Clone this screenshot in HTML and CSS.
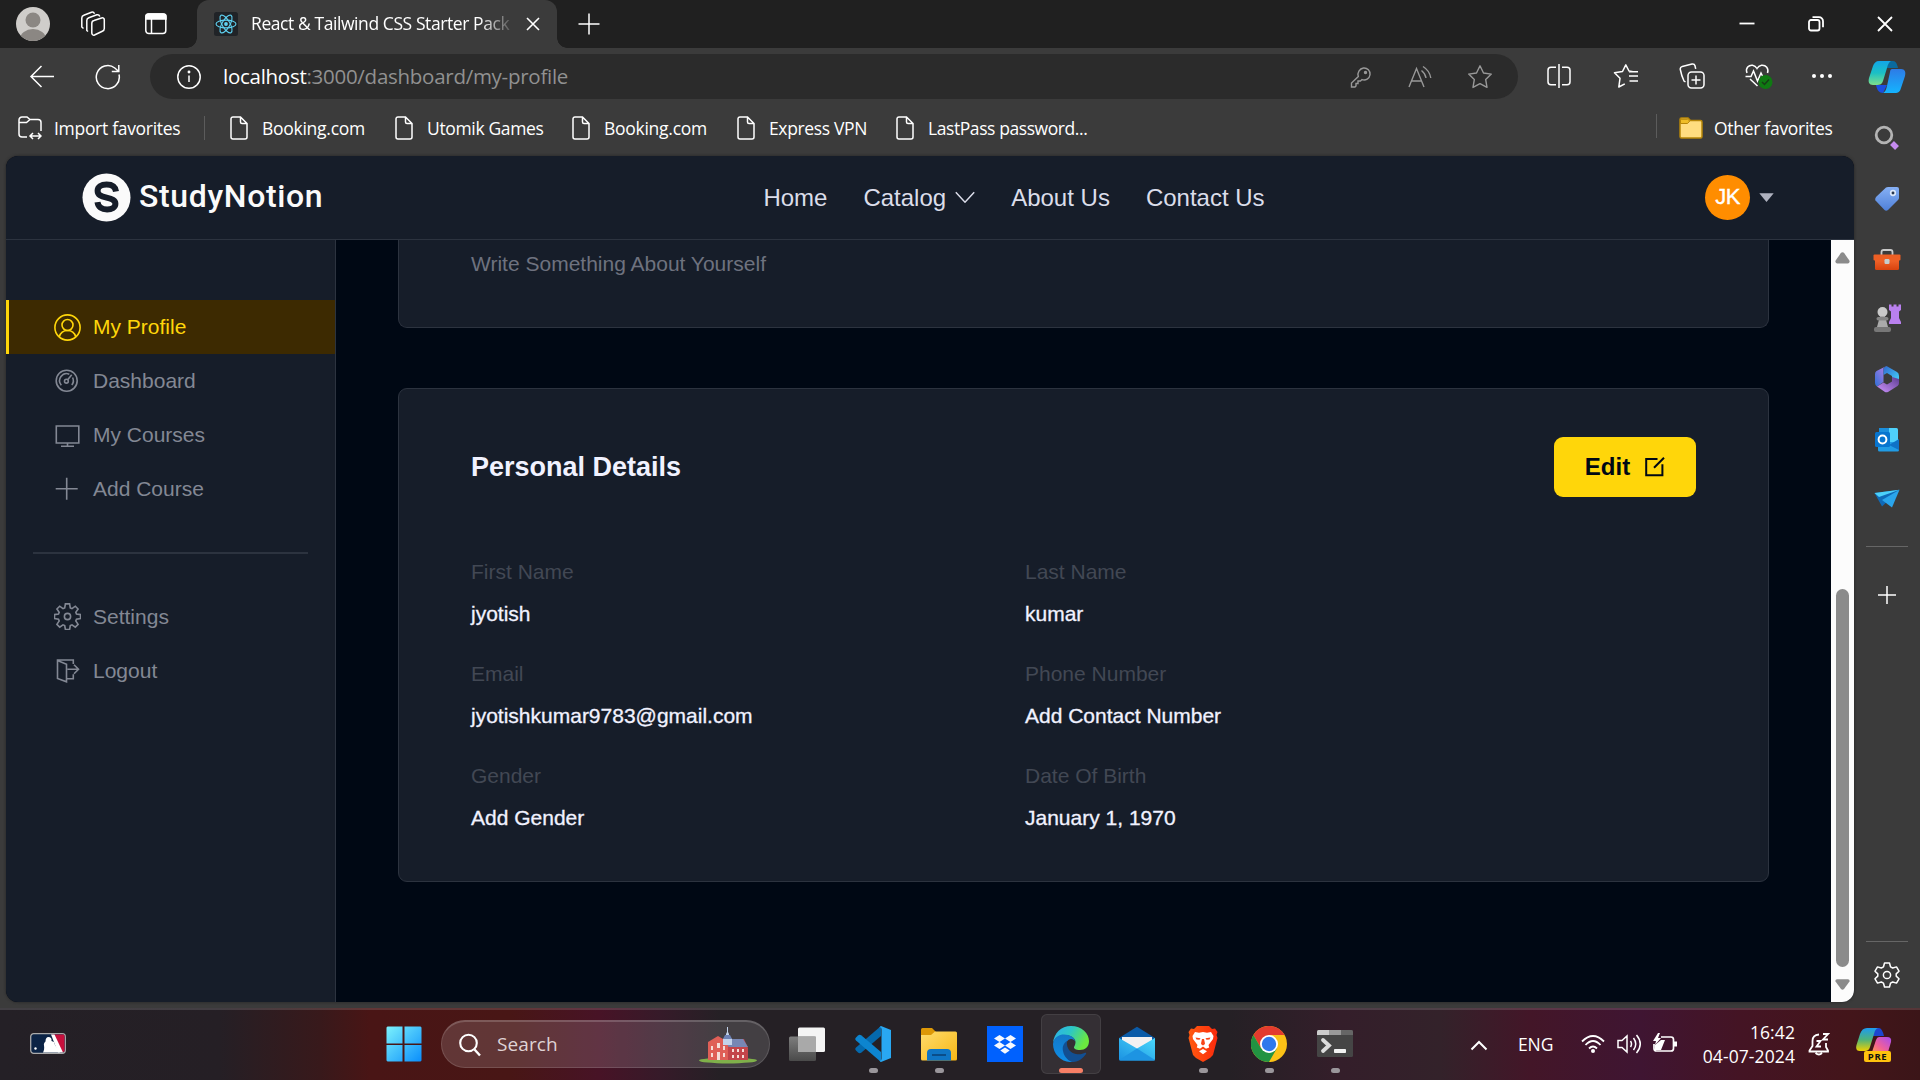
FILE: index.html
```html
<!DOCTYPE html>
<html lang="en">
<head>
<meta charset="utf-8">
<title>React &amp; Tailwind CSS Starter Pack</title>
<link rel="stylesheet" href="styles.css">
</head>
<body>
<svg class="defs" width="0" height="0" aria-hidden="true">
  <defs>
    <symbol id="doc" viewBox="0 0 18 24"><path d="M3 .9h7.5L17 7.5V21a2 2 0 0 1-2 2H3a2 2 0 0 1-2-2V3A2 2 0 0 1 3 .9zM10.500 1v5a1.500 1.500 0 0 0 1.500 1.500h5"/></symbol>
    <linearGradient id="cpA" x1="0" y1="0" x2="0" y2="1"><stop offset="0" stop-color="#12a5e8"/><stop offset=".5" stop-color="#1cc0c4"/><stop offset="1" stop-color="#7ee08a"/></linearGradient>
    <linearGradient id="cpB" x1="0" y1="0" x2="0" y2="1"><stop offset="0" stop-color="#2e7be6"/><stop offset="1" stop-color="#14b4ff"/></linearGradient>
    <linearGradient id="hexA" x1="0" y1="1" x2="1" y2="0"><stop offset="0" stop-color="#2f6fd6"/><stop offset="1" stop-color="#c07fe8"/></linearGradient>
    <linearGradient id="hexB" x1="0" y1="0" x2="1" y2="1"><stop offset="0" stop-color="#3068cf"/><stop offset="1" stop-color="#45d6fb"/></linearGradient>
    <linearGradient id="hexC" x1="0" y1="1" x2="1" y2="0"><stop offset="0" stop-color="#cf94ff"/><stop offset="1" stop-color="#5c3d91"/></linearGradient>
    <linearGradient id="win" x1="0" y1="0" x2="1" y2="1"><stop offset="0" stop-color="#7cf2fc"/><stop offset="1" stop-color="#0a8efb"/></linearGradient>
    <linearGradient id="fold" x1="0" y1="0" x2="1" y2="1"><stop offset="0" stop-color="#ffdc6c"/><stop offset="1" stop-color="#f7b715"/></linearGradient>
    <linearGradient id="edgeTop" x1="0" y1="0" x2="1" y2=".4"><stop offset="0" stop-color="#2cadf0"/><stop offset=".5" stop-color="#2dc7c5"/><stop offset="1" stop-color="#6be93f"/></linearGradient>
    <linearGradient id="edgeLow" x1="0" y1="0" x2="0" y2="1"><stop offset="0" stop-color="#1378c8"/><stop offset="1" stop-color="#0f8ee6"/></linearGradient>
    <linearGradient id="mailG" x1="0" y1="1" x2="1" y2="0"><stop offset="0" stop-color="#1b92e2"/><stop offset="1" stop-color="#4ad8fb"/></linearGradient>
    <linearGradient id="brave" x1="0" y1="0" x2="1" y2="0"><stop offset="0" stop-color="#ff5a10"/><stop offset="1" stop-color="#fb2a0c"/></linearGradient>
    <linearGradient id="preA" x1="0" y1="0" x2="0" y2="1"><stop offset="0" stop-color="#1d9bf0"/><stop offset=".5" stop-color="#4db37c"/><stop offset="1" stop-color="#f0d000"/></linearGradient>
    <linearGradient id="preB" x1="1" y1="0" x2="0" y2="1"><stop offset="0" stop-color="#a64bf0"/><stop offset=".6" stop-color="#f0609a"/><stop offset="1" stop-color="#ff9a50"/></linearGradient>
    <linearGradient id="tag" x1="0" y1="0" x2="0" y2="1"><stop offset="0" stop-color="#86b0f5"/><stop offset="1" stop-color="#4f80d8"/></linearGradient>
    <linearGradient id="tool" x1="0" y1="0" x2="0" y2="1"><stop offset="0" stop-color="#fb7236"/><stop offset="1" stop-color="#d8420e"/></linearGradient>
    <linearGradient id="tv" x1="0" y1="0" x2="0" y2="1"><stop offset="0" stop-color="#7d7d7d"/><stop offset="1" stop-color="#4a4a4a"/></linearGradient>
  </defs>
</svg>

<div class="desktop">
  <div class="browser">
    <div class="tabstrip">
      <div class="strip-tools">
        <svg width="34" height="34" viewBox="0 0 34 34"><clipPath id="av"><circle cx="17" cy="17" r="17"/></clipPath><g clip-path="url(#av)"><rect width="34" height="34" fill="#cfcdca"/><circle cx="17" cy="13" r="7.500" fill="#8b8783"/><ellipse cx="17" cy="32" rx="13" ry="10" fill="#8b8783"/></g></svg>
        <svg class="line" width="26" height="26" viewBox="0 0 26 26"><path d="M14 9.500 21.500 7a2 2 0 0 1 2.800 2v8.500a3 3 0 0 1-2 2.800L14.500 24a2 2 0 0 1-2.700-2v-9.500a3 3 0 0 1 2.200-3z"/><path d="M8 20.500 6.800 19.500V9.500a3 3 0 0 1 2-2.800l8-2.900c1.500-.4 2.500.3 3 1.700M3.500 17.500 1.800 16V7a3 3 0 0 1 2-2.800L11.500 1.200c1.500-.4 2.500.3 3 1.500"/></svg>
        <svg class="line" width="24" height="24" viewBox="0 0 24 24"><rect x="1.800" y="2" width="20" height="19.500" rx="3"/><path d="M7.500 7v14.500"/><path d="M2 6V4.500A2.500 2.500 0 0 1 4.500 2h15A2.500 2.500 0 0 1 22 4.500V7H2z" fill="#fff"/></svg>
      </div>
      <div class="tab">
        <svg class="favicon" width="24" height="24" viewBox="0 0 24 24"><rect width="24" height="24" rx="2.500" fill="#202327"/><g fill="none" stroke="#5fd3f3" stroke-width="1.100"><ellipse cx="12" cy="12" rx="10" ry="3.900"/><ellipse cx="12" cy="12" rx="10" ry="3.900" transform="rotate(60 12 12)"/><ellipse cx="12" cy="12" rx="10" ry="3.900" transform="rotate(120 12 12)"/></g><circle cx="12" cy="12" r="1.900" fill="#5fd3f3"/></svg>
        <span class="tab-title">React &amp; Tailwind CSS Starter Pack</span>
        <svg class="line" width="14" height="14" viewBox="0 0 14 14"><path d="M1 1l12 12M13 1 1 13" stroke-width="1.600"/></svg>
      </div>
      <svg class="line newtab" width="22" height="22" viewBox="0 0 22 22"><path d="M11 .5v21M.5 11h21"/></svg>
      <div class="win-controls">
        <svg class="line" width="16" height="16" viewBox="0 0 16 16"><path d="M.5 7.500h15" stroke-width="1.800"/></svg>
        <svg class="line" width="16" height="16" viewBox="0 0 16 16"><rect x="1" y="4" width="10.500" height="10.500" rx="2" stroke-width="1.800"/><path d="M4.500 1.200h6.500a4 4 0 0 1 4 4v6" stroke-width="1.800"/></svg>
        <svg class="line" width="16" height="16" viewBox="0 0 16 16"><path d="M1 1l14 14M15 1 1 15" stroke-width="1.800"/></svg>
      </div>
    </div>

    <div class="window">
      <div class="window-left">
        <div class="toolbar">
          <div class="nav-buttons">
            <svg class="line" width="26" height="26" viewBox="0 0 26 26"><path d="M25 12.500H2M12.500 2 2 12.500 12.500 23"/></svg>
            <svg class="line" width="26" height="26" viewBox="0 0 26 26"><path d="M24 10.500A11.500 11.500 0 1 1 19.800 4l3.700 3.200M23.800 1v6.500h-7"/></svg>
          </div>
          <div class="address">
            <svg class="line" width="26" height="26" viewBox="0 0 26 26"><circle cx="13" cy="13" r="11.200"/><path d="M13 11.500v6.500"/><circle cx="13" cy="8" r=".7" fill="#fff"/></svg>
            <span class="url"><b>localhost</b>:3000/dashboard/my-profile</span>
            <div class="address-actions">
              <svg class="dim" width="22" height="22" viewBox="0 0 22 22"><path d="M13.500 2A6 6 0 1 1 12 13.600L10.500 15H8v2.500H6V20l-1 1H1.500v-4l6.800-6.500A6.500 6.500 0 0 1 13.500 2z"/><circle cx="15.500" cy="6.500" r="1" fill="#999"/></svg>
              <svg class="dim" width="26" height="26" viewBox="0 0 26 26"><path d="M2 23 9.500 4.500 17 23M4.700 17h9.700M14.500 6.500c2.500 2 4 4.500 4.500 7.500M16 2.500c4 2.500 7 6.500 7.800 11.500"/></svg>
              <svg class="dim" width="26" height="26" viewBox="0 0 26 26"><path d="M13 1.800 16.500 9l7.800 1.100-5.600 5.500L20 23.400l-7-3.700-7 3.700 1.300-7.800-5.600-5.500L9.500 9z" stroke-linejoin="round"/></svg>
            </div>
          </div>
          <div class="tool-icons">
            <svg class="line" width="26" height="26" viewBox="0 0 26 26"><path d="M10 4.200H5a3 3 0 0 0-3 3v11.500a3 3 0 0 0 3 3h5M16 4.200h5a3 3 0 0 1 3 3v11.500a3 3 0 0 1-3 3h-5M13 1v24"/></svg>
            <svg class="line" width="26" height="26" viewBox="0 0 26 26"><path d="M20 8.800 16 8 12.800 1.800 9.500 8.500 1.500 9.800l5.500 5.500L5.800 24l6-3.200M16 13h9M16.500 18h8.500M16 8.800h9" stroke-linejoin="round"/></svg>
            <svg class="line" width="26" height="26" viewBox="0 0 26 26"><rect x="9" y="9" width="16" height="16" rx="3.500"/><path d="M17 12.500v9M12.500 17h9M6.500 19 5 18C3 14 2 10 1.300 6.500 1 5 1.800 3.900 3.300 3.400L13 1c1.600-.3 2.600.3 3 1.800l.7 3"/></svg>
            <svg class="line" width="30" height="26" viewBox="0 0 30 26"><path d="M3 10C1 5 5 1.800 8.500 2.200c2 .3 3.500 1.500 4.500 3.300 1-1.800 2.500-3 4.500-3.300C22 1.800 25 5.500 23.500 10M1.500 13.500H7L9.500 8l4 10 3.500-8 1.500 3M6 16l7.500 7"/><circle cx="21.500" cy="19" r="7" fill="#0f7a12" stroke="none"/><path d="m18 19 2.500 2.500 4.500-5" stroke="#173d17"/></svg>
            <svg width="22" height="6" viewBox="0 0 22 6" fill="#fff"><circle cx="3" cy="3" r="2"/><circle cx="11" cy="3" r="2"/><circle cx="19" cy="3" r="2"/></svg>
          </div>
        </div>
        <div class="favorites">
          <div class="fav fav-import"><svg class="line" width="24" height="24" viewBox="0 0 24 24"><path d="M9 21H4a3 3 0 0 1-3-3V4a3 3 0 0 1 3-3h5l3 2.500h8a3 3 0 0 1 3 3V15M1 6.500h7.500L12 3.500M12 20h11M15 17l-3 3 3 3M20 17l3 3-3 3"/></svg><span>Import favorites</span></div>
          <i class="vbar"></i>
          <div class="fav f1"><svg class="line" width="18" height="24"><use href="#doc"/></svg><span>Booking.com</span></div>
          <div class="fav f2"><svg class="line" width="18" height="24"><use href="#doc"/></svg><span>Utomik Games</span></div>
          <div class="fav f3"><svg class="line" width="18" height="24"><use href="#doc"/></svg><span>Booking.com</span></div>
          <div class="fav f4"><svg class="line" width="18" height="24"><use href="#doc"/></svg><span>Express VPN</span></div>
          <div class="fav f5"><svg class="line" width="18" height="24"><use href="#doc"/></svg><span>LastPass password...</span></div>
          <i class="vbar vbar-right"></i>
          <div class="fav fav-other"><svg width="24" height="22" viewBox="0 0 24 22"><path d="M1 4V2.500A1.500 1.500 0 0 1 2.500 1H9l2.500 2.500h10A1.500 1.500 0 0 1 23 5v14.500a1.500 1.500 0 0 1-1.500 1.500h-19A1.500 1.500 0 0 1 1 19.500z" fill="#ffdd80" stroke="#b78608" stroke-width="1.500"/><path d="M1.500 6.500V2.300h7.200L10.800 4 8.500 6.500z" fill="#efbd27" stroke="#b78608"/></svg><span>Other favorites</span></div>
        </div>

        <div class="page">
          <header class="site-header">
            <div class="logo">
              <svg width="49" height="49" viewBox="0 0 49 49"><circle cx="24.500" cy="24.500" r="24" fill="#fafafa"/><path d="M34 18.500C33.400 13.800 30 11.500 24.600 11.500c-5.500 0-9 2.500-9 6.300 0 4.200 3.300 5.500 9 6.800 5.400 1.300 8.800 2.300 8.800 6.200 0 3.600-3.500 5.700-8.300 5.700-5.400 0-9-2.600-9.600-7.300" fill="none" stroke="#161d29" stroke-width="6"/></svg>
              <span>StudyNotion</span>
            </div>
            <nav class="site-nav">
              <a>Home</a>
              <a class="catalog">Catalog <svg width="20" height="13" viewBox="0 0 20 13"><path d="m.8 1.200 9.200 10 9.200-10" fill="none" stroke="#dbddea" stroke-width="1.500"/></svg></a>
              <a>About Us</a>
              <a>Contact Us</a>
            </nav>
            <div class="user"><span class="avatar">JK</span><svg width="15" height="10" viewBox="0 0 15 10"><path d="M.3.300h14.400L7.500 9z" fill="#afb2bf"/></svg></div>
          </header>
          <div class="page-body">
            <aside class="menu">
              <a class="menu-item active"><svg class="mi" width="27" height="27" viewBox="0 0 27 27"><circle cx="13.500" cy="13.500" r="12.600"/><circle cx="13.500" cy="11" r="5.500"/><path d="M5.300 22.700c1-3.500 4.200-6.200 8.200-6.200s7.200 2.700 8.200 6.200"/></svg>My Profile</a>
              <a class="menu-item"><svg class="mi" width="27" height="27" viewBox="0 0 27 27"><circle cx="12.700" cy="12.700" r="10.500"/><path d="M7.300 17.200a7 7 0 0 1 8-11M18.600 9.500a7 7 0 0 1-.8 7.400"/><circle cx="12.400" cy="13.200" r="1.900"/><path d="m13.700 11.800 4-5"/></svg>Dashboard</a>
              <a class="menu-item"><svg class="mi" width="27" height="27" viewBox="0 0 27 27"><path d="M2.300 4h22.500v17H2.300zM7 24.300h13M13.500 21v3.300"/></svg>My Courses</a>
              <a class="menu-item"><svg class="mi" width="27" height="27" viewBox="0 0 27 27"><path d="M12.700 1.700v22M1.700 12.700h22"/></svg>Add Course</a>
              <hr>
              <a class="menu-item"><svg class="mi" width="27" height="27" viewBox="0 0 27 27"><path d="M11.400.9h4.200l.7 4 1.700.7L21.300 3.200l2.800 2.800-2.300 3.300.7 1.700 4 .6v4l-4 .7-.7 1.700 2.300 3.300-2.800 2.800-3.300-2.300-1.700.7-.7 4h-4.200l-.7-4-1.700-.7-3.300 2.300L2.900 21.300l2.300-3.300-.7-1.700-4-.7v-4l4-.6.7-1.700L2.900 6l2.800-2.800L9 5.600l1.700-.7z"/><circle cx="13.500" cy="13.500" r="3.100"/></svg>Settings</a>
              <a class="menu-item"><svg class="mi" width="27" height="27" viewBox="0 0 27 27"><path d="M19.300 7V3H3.500v18.500l9 3.300V7.300L3.500 3.500M12.500 21.700h6.800v-4.400M13.500 12.300h10.700M20 7.800l4.500 4.500-4.500 4.500"/></svg>Logout</a>
            </aside>
            <main class="content">
              <section class="card about"><p>Write Something About Yourself</p></section>
              <section class="card details">
                <div class="details-head">
                  <h2>Personal Details</h2>
                  <button class="edit">Edit<svg width="20" height="20" viewBox="0 0 20 20"><path d="M12.500 2H1.200v16.300h16.200V7.200M9 10.800 19 .7" fill="none" stroke="#000814" stroke-width="2"/></svg></button>
                </div>
                <dl class="fields">
                  <div><dt>First Name</dt><dd>jyotish</dd></div>
                  <div><dt>Last Name</dt><dd>kumar</dd></div>
                  <div><dt>Email</dt><dd>jyotishkumar9783@gmail.com</dd></div>
                  <div><dt>Phone Number</dt><dd>Add Contact Number</dd></div>
                  <div><dt>Gender</dt><dd>Add Gender</dd></div>
                  <div><dt>Date Of Birth</dt><dd>January 1, 1970</dd></div>
                </dl>
              </section>
            </main>
            <div class="scrollbar">
              <svg width="15" height="12" viewBox="0 0 15 12"><path d="M6 .8Q7.500-.4 9 .8l5.500 8Q15 11 13 11.500H2Q0 11 .5 8.800z" fill="#8b8b8b"/></svg>
              <i class="thumb"></i>
              <svg width="15" height="11" viewBox="0 0 15 11"><path d="M6 10Q7.500 11.400 9 10l5.500-7.500Q15 .5 13 .2H2Q0 .5.500 2.500z" fill="#8b8b8b"/></svg>
            </div>
          </div>
        </div>
      </div>

      <aside class="edge-bar">
        <svg class="copilot" width="38" height="34" viewBox="0 0 38 34"><path d="M8 25h11l-4 8c-4 0-6-3-7-8z" fill="#1b4fe0"/><path d="M19 1h6c3 0 4 3 5 7H19z" fill="#0a6a9e"/><path d="M11 1h12c-2 1-3 3-4 7l-4 13c-1 3-3 4-6 4H5c-4 0-5-3-4-7L5 6c1-3 3-5 6-5z" fill="url(#cpA)"/><path d="M24 9h9c4 0 5 3 4 7l-4 12c-1 4-3 5-6 5H15c2-1 3-3 4-7l3-14c0-2 1-3 2-3z" fill="url(#cpB)"/></svg>
        <svg width="26" height="26" viewBox="0 0 26 26"><circle cx="10" cy="10" r="7.800" fill="none" stroke="#b4b4b4" stroke-width="2.800"/><path d="m18 18 5 5" stroke="#c58bf0" stroke-width="5.500"/></svg>
        <svg width="26" height="26" viewBox="0 0 26 26"><path d="M12 1.500Q13 1 14 1h9q2 0 2 2v9q0 1-1 2L14 24q-2 1.500-3.500 0L1.500 14.500Q.5 13 2 11z" fill="url(#tag)"/><circle cx="19" cy="7" r="2.300" fill="#27364e" stroke="#dde8fa" stroke-width="1.700"/></svg>
        <svg width="28" height="22" viewBox="0 0 28 22"><path d="M8.500 6V3q0-2 2-2h7q2 0 2 2v3" fill="none" stroke="#c9c9c9" stroke-width="1.800"/><rect x="2" y="7" width="24" height="14" rx="1.500" fill="url(#tool)"/><rect x=".5" y="5.500" width="27" height="6" rx="1" fill="#ed5f24"/><rect x="11.500" y="10" width="5" height="5" rx="1.200" fill="#c5cdcf"/></svg>
        <svg width="28" height="28" viewBox="0 0 28 28"><path d="M16 .5h2.500v2h2V.5h3v2h2V.5H28V6l-2 1.500V14l2 4v2H16v-2l2-4V7.500L16 6z" fill="#b980ee"/><circle cx="9.500" cy="8" r="5" fill="#c9c9c9"/><path d="M7 12h5l3 11H4z" fill="#aaa"/><rect x="3.500" y="13" width="12" height="3.500" rx="1.700" fill="#858585"/><rect x="1" y="23" width="17" height="5" rx="2" fill="#777"/></svg>
        <svg width="26" height="28" viewBox="0 0 26 28"><path d="M12.500 1 9.500 3v14l-6.500 4.500Q1 20 1 18V9q0-2 1.500-3z" fill="url(#hexA)"/><path d="M12.500 1 23 7q2 1 2 4v6l-7-4.500V11l-5-3-3.500 2V3z" fill="url(#hexB)"/><path d="M25 14v4q0 2-1.500 3L14 27q-2 .5-3 0l-8-5.500 6.500-4 3.500 2 5-3V12z" fill="url(#hexC)"/></svg>
        <svg width="26" height="25" viewBox="0 0 26 25"><rect x="5" y="1" width="19" height="23" rx="1.500" fill="#4fd1fb"/><path d="M5 1h10v12H5z" fill="#1b8edb"/><path d="M4 15h21v8q0 1.500-1.500 1.500h-18Q4 24.500 4 23z" fill="#219ce5"/><path d="m15 18 10-6v11z" fill="#0f72c6"/><rect x="1" y="5" width="15" height="15" rx="1.500" fill="#0875cf"/><circle cx="8.500" cy="12.500" r="3.900" fill="none" stroke="#fff" stroke-width="2"/></svg>
        <svg width="26" height="19" viewBox="0 0 26 19"><path d="M.5 4 25.500.8 8 17.500z" fill="#0f6ab8"/><path d="M.5 4 25.500.8 5 8z" fill="#4cd0fa"/><path d="M25.500.8 18 18.500 8 11z" fill="#2aa5ec"/></svg>
        <i class="hbar"></i>
        <svg class="line" width="18" height="18" viewBox="0 0 18 18"><path d="M9 0v18M0 9h18"/></svg>
        <i class="hbar hbar-bottom"></i>
        <svg class="line" width="26" height="26" viewBox="0 0 26 26"><path d="M10.500 1h5l1 3.800 2.200 1.200 3.800-1.100 2.500 4.300-2.800 2.700v2.200l2.800 2.700-2.500 4.300-3.800-1.100-2.200 1.200-1 3.800h-5l-1-3.800-2.200-1.200-3.800 1.100L1 16.800l2.800-2.700v-2.200L1 9.200l2.500-4.300L7.300 6l2.200-1.200z" stroke-linejoin="round"/><circle cx="13" cy="13" r="3.600"/></svg>
      </aside>
    </div>
  </div>

  <footer class="taskbar">
    <svg class="mlb" width="36" height="21" viewBox="0 0 36 21"><rect x=".7" y=".7" width="34.600" height="19.600" rx="3" fill="#0b2345" stroke="#aaa" stroke-width="1.300"/><path d="M22 1.500h11.500q1 0 1 1v16l-3 1z" fill="#c6103c"/><path d="m21 1.500 3.500 0 8.500 18-5 0z" fill="#fff"/><path d="M13 19.500c1-2 1.500-4 1-7-.5-2 .5-3 1.500-4 0-3 1-4.500 3-4.500s3.500 1.500 3 4l2.500 1 1 3 5 7.500z" fill="#fff"/><circle cx="5.500" cy="15.500" r="1.200" fill="#fff"/></svg>
    <svg class="start" width="36" height="36" viewBox="0 0 36 36"><path d="M1.500.500h15v17H.5v-16zM18.500.500h16l1 1v16h-17zM.5 19h16v16.500h-15l-1-1zM18.500 19h17v15.500l-1 1h-16z" fill="url(#win)"/></svg>
    <div class="search">
      <svg width="22" height="24" viewBox="0 0 22 24"><circle cx="9.500" cy="10" r="8.300" fill="none" stroke="#fff" stroke-width="2.100"/><path d="m15.500 16.500 5.500 6" stroke="#fff" stroke-width="2.400"/></svg>
      <span>Search</span>
      <svg class="hall" width="60" height="38" viewBox="0 0 60 38"><ellipse cx="30" cy="34.500" rx="29" ry="3" fill="#7fb04a"/><path d="M20 18 32 13h14l4 9v12H20z" fill="#c3454a"/><path d="M24 19 28 13h17l5 8H32z" fill="#7787b5"/><path d="M10 16l10-6 10 6v18H10z" fill="#df5f57"/><path d="M29 1v5l-1 2v3l-3 2v6h9v-6l-3-2V8l-1-2V1z" fill="#c3d3ea"/><path d="M25 13h9l-2-4h-5z" fill="#6e83b6"/><path d="M13 20h2v4h-2zM19 17h3v5h-3zM25 20h2v4h-2zM13 27h2v4h-2zM19 26h3v8h-3zM25 27h2v4h-2zM34 23h2v3h-2zM39 23h2v3h-2zM44 23h2v3h-2zM34 29h2v3h-2zM39 29h2v3h-2zM44 29h2v3h-2z" fill="#f5ddd8"/></svg>
    </div>
    <div class="apps">
      <div class="app"><svg width="36" height="36" viewBox="0 0 36 36"><rect x="9" y="1.500" width="27" height="24.500" rx="1.500" fill="#f4f4f4"/><rect x="0" y="10.500" width="27" height="24.500" rx="1.500" fill="url(#tv)"/><path d="M9 10.500h18V26H9z" fill="#a9a9a9"/></svg></div>
      <div class="app run"><svg width="36" height="36" viewBox="0 0 36 36"><path d="M26 0v10L6.500 26.500q-2 1.500-3.500 0l-2-2q-1.500-1.500 0-3z" fill="#0569ad"/><path d="M26 36V26L6.500 9.500Q4.500 8 3 9.500l-2 2q-1.500 1.500 0 3z" fill="#0d85d0"/><path d="M26 0l10 4v28l-10 4-2-1.500q2.500 1 2.500-2v-29q0-3-2.500-2z" fill="#29a8f2"/></svg></div>
      <div class="app run"><svg width="36" height="36" viewBox="0 0 36 36"><path d="M0 3.500Q0 2 1.500 2H11l3.500 3.500v5H0z" fill="#dd9807"/><path d="M0 9h10l4-3.500h20.500Q36 5.500 36 7v26q0 1.500-1.500 1.500h-33Q0 34.500 0 33z" fill="url(#fold)"/><path d="M6 34.500V27q0-4 4-4h16q4 0 4 4v7.500z" fill="#0f75c4"/><path d="M11 29h14" stroke="#0a4175" stroke-width="1.500"/></svg></div>
      <div class="app"><svg width="36" height="36" viewBox="0 0 36 36"><path d="M0 0h36v36H0z" fill="#0061fe"/><path d="m12.500 9 5.500 3.500-5.500 3.500L7 12.500zM23.500 9l5.500 3.500-5.500 3.500-5.500-3.500zM12.500 16l5.500 3.500-5.500 3.500L7 19.500zM23.500 16l5.500 3.500-5.500 3.500-5.500-3.500zM18 21.500l4.700 3-4.700 3.200-4.700-3.200z" fill="#f5f8ff"/></svg></div>
      <div class="app run current"><svg width="36" height="36" viewBox="0 0 36 36"><path d="M0 17C1 7 8 0 18 0c11 0 18 7.500 18 15 0 6-4 9-9 9-4.500 0-6.500-1.500-6-3 1-2 1.500-3 1.500-5 0-4-5-7-11-7C6 9 1.500 12 0 17z" fill="url(#edgeTop)"/><path d="M0 18C1 11 6 8.500 11 8.500c6 0 11 3 11 7 0-1-1.500-2.500-4-2.500-3 0-5 3-5 7 0 7 6 12 13 10-2 4-6 6-9 6C8 35.500 0 28 0 18z" fill="url(#edgeLow)"/><path d="M14 15c-3 2-5 5-4 10 1 6 6 10.500 10 11 6 0 10-4 13-8 .6-1-.5-1.500-1.500-1-3 1.500-6 1.500-8.500 1-5-1-10-5-9-13z" fill="#124f92"/></svg></div>
      <div class="app"><svg width="36" height="36" viewBox="0 0 36 36"><path d="M0 12 18 .8 36 12v8H0z" fill="#0b5ba8"/><path d="M3 11h30v12H3z" fill="#f3f1f2"/><path d="M0 12l18 10.500L36 12v21q0 1.500-1.500 1.500h-33Q0 34.500 0 33z" fill="url(#mailG)"/><path d="M18 22.500 36 34q-.5.500-1.500.5h-33L0 34z" fill="#1d94e2"/></svg></div>
      <div class="app run"><svg width="30" height="36" viewBox="0 0 30 36"><path d="M9 0h12l3 3 3-.5L29.500 6l-1 3 1 3-4.500 17-3 3-7 4-7-4-3-3L.5 12l1-3-1-3L3 2.500 6 3z" fill="url(#brave)"/><path d="m4.500 10 2.500-4 4 .8L15 6l4 .8 4-.8 2.500 4-.5 3-4.500 6 .7 2.500-3.200 1.200L15 20.500l-3 2.200-3.200-1.200.7-2.500L5 13zM15 23l4 2.300-4 3-4-3z" fill="#fff"/><path d="m7.500 11.500 5 .8-1 1.500-3-.3zM22.500 11.500l-5 .8 1 1.500 3-.3zM14 13h2l1 4.500-.5 1L15 19.500l-1.500-1-.5-1z" fill="#f8461a"/></svg></div>
      <div class="app run"><svg width="36" height="36" viewBox="0 0 36 36"><circle cx="18" cy="18" r="18" fill="#fbc116"/><path d="M2.400 9A18 18 0 0 1 33.600 9H18l-7.800 13.500z" fill="#e33b2e"/><path d="M2.400 9A18 18 0 0 0 18 36l7.800-13.500H10.200z" fill="#229342"/><circle cx="18" cy="18" r="9" fill="#fff"/><circle cx="18" cy="18" r="7.200" fill="#2f78ec"/></svg></div>
      <div class="app run"><svg width="36" height="36" viewBox="0 0 36 36"><rect y="4" width="36" height="27" rx="1.500" fill="#454545"/><path d="M0 9V5.500Q0 4 1.500 4H12v5z" fill="#ccc"/><path d="M12 4h12v5H12z" fill="#999"/><path d="M24 4h10.500Q36 4 36 5.500V9H24z" fill="#666"/><path d="m6 14 6 5.500L6 25" fill="none" stroke="#ddd" stroke-width="3.800" stroke-linecap="round"/><rect x="17" y="23" width="12" height="4" rx=".8" fill="#f2f2f2"/></svg></div>
    </div>
    <div class="tray">
      <svg class="line chev" width="18" height="11" viewBox="0 0 18 11"><path d="m1.500 9.500 7.500-7.500 7.500 7.500" stroke-width="2"/></svg>
      <span class="lang">ENG</span>
      <svg class="line wifi" width="26" height="20" viewBox="0 0 26 20"><path d="M2 7.500q11-11 22 0M5.500 11q7.500-8 15 0M9 14.500q4-4 8 0" stroke-width="1.800"/><circle cx="13" cy="17" r="2" fill="#fff" stroke="none"/></svg>
      <svg class="line vol" width="26" height="20" viewBox="0 0 26 20"><path d="M2 6.500h4L11 2v16l-5-4.500H2zM14.500 7q2 3 0 6M17.500 4q4.500 6 0 12M20.500 1q7.500 9 0 18"/></svg>
      <svg class="line bat" width="26" height="20" viewBox="0 0 26 20"><path d="M9 3h10q2.500 0 2.500 2.500v9q0 2.500-2.500 2.500H4.500Q2 17 2 14.500V10" stroke-width="1.700"/><path d="M3 16V11l6-5h4L9 16z" fill="#fff" stroke="none"/><path d="M6-1 1 7h3l-1 4 6-7H6l2-5z" fill="#fff" stroke="none"/><path d="M23.500 7.500v5" stroke-width="3"/></svg>
      <div class="clock"><span>16:42</span><span>04-07-2024</span></div>
      <svg class="line bell" width="22" height="24" viewBox="0 0 22 24"><path d="M11 2.500Q4.500 3 4.500 9v5L1.500 18.500v1H20v-1l-2-3.500V11M7.500 21q3.500 3 6.500 0M15 2h5l-5 5.500h5M8.500 9h4L8.500 14.500h4.500" stroke-width="1.800"/></svg>
      <div class="pre">
        <svg width="36" height="36" viewBox="0 0 36 36"><path d="M18 1h5q3 0 5 8H17z" fill="#1c46d0"/><path d="M11 1h11q-3 1-4 6l-4 13q-1 4-5 4H4q-5 0-3.500-6L4 7q2-6 7-6z" fill="url(#preA)"/><path d="M23 10h8q5 0 4 5l-3 10H16l4-12q1-3 3-3z" fill="url(#preB)"/></svg>
        <b>PRE</b>
      </div>
    </div>
  </footer>
</div>
</body>
</html>
```
FILE: styles.css
```css
* { box-sizing: border-box; margin: 0; }
body { width: 1920px; height: 1080px; overflow: hidden; font-family: "Liberation Sans", Arial, sans-serif; background: #3b3b3b; }
svg { display: block; flex: none; }
.defs { position: absolute; }
.line { fill: none; stroke: #fff; stroke-width: 1.5; }
.dim { fill: none; stroke: #999; stroke-width: 1.4; }
.desktop { height: 1080px; display: flex; flex-direction: column; }
.browser { height: 1008px; display: flex; flex-direction: column; color: #fff; }

/* tab strip */
.tabstrip { height: 48px; background: #202020; display: flex; align-items: center; font-family: "Open Sans", sans-serif; }
.strip-tools { width: 197px; padding-left: 16px; display: flex; align-items: center; gap: 30px; }
.strip-tools svg:last-child { margin-left: 8px; }
.tab { position: relative; width: 360px; height: 48px; padding: 0 16px 0 17px; display: flex; align-items: center; background: #3b3b3b; border-radius: 12px 12px 0 0; }
.tab::before, .tab::after { content: ""; position: absolute; bottom: 0; width: 10px; height: 10px; }
.tab::before { left: -10px; background: radial-gradient(circle at 0 0, transparent 9.500px, #3b3b3b 10px); }
.tab::after { right: -10px; background: radial-gradient(circle at 100% 0, transparent 9.500px, #3b3b3b 10px); }
.tab-title { width: 262px; margin: -2px 12px 0 13px; overflow: hidden; white-space: nowrap; font-size: 17.5px; letter-spacing: -.42px; -webkit-mask-image: linear-gradient(90deg, #000 228px, transparent 265px); mask-image: linear-gradient(90deg, #000 228px, transparent 265px); }
.tab svg:last-child { margin-left: 1px; }
.newtab { margin-left: 21px; }
.win-controls { margin-left: auto; margin-right: 27px; display: flex; gap: 53px; }

.window { flex: 1; display: flex; min-height: 0; }
.window-left { width: 1854px; display: flex; flex-direction: column; }

/* address row */
.toolbar { height: 57px; display: flex; align-items: center; }
.nav-buttons { width: 150px; padding-left: 29px; display: flex; gap: 40px; }
.address { width: 1368px; height: 45px; padding: 0 25px 0 26px; display: flex; align-items: center; background: #2b2b2b; border-radius: 23px; font-family: "Open Sans", sans-serif; }
.url { margin: -2px 0 0 21px; font-size: 20.5px; letter-spacing: -.27px; color: #919191; white-space: nowrap; }
.url b { font-weight: 400; color: #fff; }
.address-actions { margin-left: auto; display: flex; align-items: center; gap: 34px; }
.address-actions svg:first-child { margin-right: 1px; }
.tool-icons { width: 336px; padding-left: 28px; display: flex; align-items: center; gap: 40.5px; }
.tool-icons svg { margin-top: -1px; }
.tool-icons svg:nth-child(4) { margin-left: -2px; }
.tool-icons svg:last-child { margin-left: -3px; }

/* favourites row */
.favorites { height: 51px; padding: 0 22px 5px 18px; display: flex; align-items: center; font-family: "Open Sans", sans-serif; font-size: 17.5px; letter-spacing: -.35px; white-space: nowrap; }
.fav { display: flex; align-items: center; gap: 14px; }
.fav-import { width: 186px; gap: 12px; letter-spacing: -.3px; }
.vbar { width: 1px; height: 24px; background: #5c5c5c; }
.f1 { margin-left: 25px; width: 165px; letter-spacing: -.27px; }
.f2 { width: 177px; }
.f3 { width: 165px; letter-spacing: -.27px; }
.f4 { width: 159px; }
.f5 { letter-spacing: -.42px; }
.vbar-right { margin: -4px 22px 0 auto; }
.fav-other { width: 153px; gap: 11px; letter-spacing: -.29px; }

/* web page */
.page { flex: none; width: 1848px; height: 846px; margin-left: 6px; border-radius: 12px; overflow: hidden; background: #000814; box-shadow: 0 0 3px #222; display: flex; flex-direction: column; }
.site-header { height: 84px; padding: 0 80px 0 76px; display: flex; justify-content: space-between; align-items: center; background: #161d29; border-bottom: 1px solid #2c333f; color: #dbddea; }
.logo { display: flex; align-items: center; gap: 8px; width: 241px; font: 500 32px Roboto, sans-serif; letter-spacing: .65px; white-space: nowrap; color: #fafafa; }
.logo span { line-height: 40px; margin-top: -3px; }
.site-nav { display: flex; gap: 36px; font-size: 24px; }
.site-nav a { display: flex; align-items: center; gap: 9px; line-height: 36px; }
.user { display: flex; align-items: center; gap: 9px; }
.avatar { width: 45px; height: 45px; border-radius: 50%; background: #ff8d00; color: #fff; font-size: 22px; letter-spacing: -.6px; line-height: 44px; text-align: center; -webkit-text-stroke: .4px #fff; }
.page-body { flex: 1; min-height: 0; display: flex; }
.menu { width: 330px; padding-top: 60px; background: #161d29; border-right: 1px solid #2c333f; }
.menu-item { height: 54px; padding-left: 45px; border-left: 3px solid transparent; display: flex; align-items: center; gap: 12px; font-size: 21px; color: #838894; }
.mi { fill: none; stroke: currentColor; stroke-width: 1.6; }
.menu-item.active { background: #3d2a01; border-left-color: #ffd60a; color: #ffd60a; }
.menu hr { width: 275px; height: 2px; margin: 36px 0 35.5px 27px; border: 0; background: #2c333f; }
.menu hr + .menu-item .mi { margin-top: -1px; }
.content { flex: 1; padding: 0 62px; }
.card { width: 1371px; background: #161d29; border: 1px solid #2c333f; border-radius: 9px; }
.about { height: 88px; padding: 8px 72px; border-top: 0; border-radius: 0 0 9px 9px; font-size: 21px; line-height: 31px; color: #6e727f; }
.details { height: 494px; margin-top: 60px; padding: 48px 72px; }
.details-head { display: flex; align-items: center; justify-content: space-between; height: 60px; }
.details h2 { font-size: 27px; color: #f1f2ff; }
.edit { width: 142px; height: 60px; padding: 0; display: flex; align-items: center; justify-content: center; gap: 15px; border: 0; border-radius: 9px; background: #ffd60a; color: #000814; font: bold 24px "Liberation Sans", Arial, sans-serif; }
.fields { width: 1107px; margin-top: 59px; display: grid; grid-template-columns: 554px 1fr; row-gap: 27px; font-size: 21px; }
.fields > div { height: 75px; }
.fields dt { line-height: 31px; margin-bottom: 13px; color: #424854; }
.fields dd { line-height: 27px; color: #f1f2ff; white-space: nowrap; -webkit-text-stroke: .3px #f1f2ff; }
.scrollbar { width: 23px; padding: 12px 4px 12px; background: #fcfcfc; display: flex; flex-direction: column; align-items: center; }
.thumb { width: 13px; height: 378px; margin: auto 0 12px; border-radius: 7px; background: #8b8b8b; }

/* browser side bar */
.edge-bar { width: 66px; display: flex; flex-direction: column; align-items: center; padding-top: 12px; }
.copilot { margin-bottom: 31px; }
.copilot + svg { margin-bottom: 35px; }
.edge-bar svg:nth-child(3) { margin-bottom: 37px; }
.edge-bar svg:nth-child(4) { margin-bottom: 33px; }
.edge-bar svg:nth-child(5) { margin-bottom: 33px; }
.edge-bar svg:nth-child(6) { margin-bottom: 34px; }
.edge-bar svg:nth-child(7) { margin-bottom: 37px; }
.hbar { width: 42px; height: 1px; background: #666; margin: 38px 0 39px; }
.hbar-bottom { margin: auto 0 20px; }
.edge-bar svg:last-child { margin-bottom: 20px; }

/* taskbar */
.taskbar { height: 72px; border-top: 2px solid rgba(255, 255, 255, .14); background: linear-gradient(90deg, #242026 0, #251f25 220px, #38191b 320px, #491515 370px, #481615 510px, #471326 600px, #361a29 660px, #252025 720px, #252025 1230px, #341e2a 1340px, #33222a 1440px, #431628 1530px, #3f1532 1640px, #441424 1740px, #43151a 1850px, #3b1518 1920px) border-box; display: flex; align-items: center; color: #fff; font-family: "Open Sans", sans-serif; }
.mlb { margin: -4px 0 0 30px; }
.start { margin: -2px 0 0 320px; }
.search { width: 329px; height: 48px; margin: -2px 0 0 19px; padding: 0 11px 0 17px; display: flex; align-items: center; border-radius: 24px; border: 1px solid rgba(255, 255, 255, .13); border-top: 2px solid rgba(255, 255, 255, .18); background: rgba(255, 255, 255, .14); }
.search span { margin: -2px 0 0 16px; font-size: 19px; letter-spacing: .1px; color: #dfd3d5; }
.hall { margin-left: auto; }
.apps { margin-left: 4px; display: flex; }
.app { position: relative; width: 60px; height: 60px; margin: -2px 3px 0; display: flex; align-items: center; justify-content: center; border-radius: 6px; }
.run::after { content: ""; position: absolute; left: 26px; bottom: 1px; width: 9px; height: 5px; border-radius: 3px; background: #9a969b; }
.current { background: rgba(255, 255, 255, .07); border: 1px solid rgba(255, 255, 255, .08); }
.current::after { left: 17px; bottom: 0; width: 24px; background: #f77f66; }
.tray { flex: 1; display: flex; align-items: center; }
.chev { margin-left: 102px; }
.lang { width: 36px; margin: -2px 26px 0 30px; font-size: 17.5px; letter-spacing: -.1px; }
.wifi, .vol, .bat { margin-top: -2px; }
.vol { margin-left: 10px; }
.bat { margin-left: 10px; overflow: visible; }
.clock { width: 117px; margin-top: -2px; display: flex; flex-direction: column; align-items: flex-end; font-size: 17.5px; line-height: 24px; letter-spacing: .1px; }
.bell { margin: -3px 0 0 13px; }
.pre { position: relative; margin: -1px 0 0 26px; }
.pre b { position: absolute; left: 8px; top: 24px; width: 27px; height: 11px; border-radius: 2px; background: #ffc20e; color: #111; font-size: 9.5px; line-height: 11px; letter-spacing: .6px; text-align: center; }
```
